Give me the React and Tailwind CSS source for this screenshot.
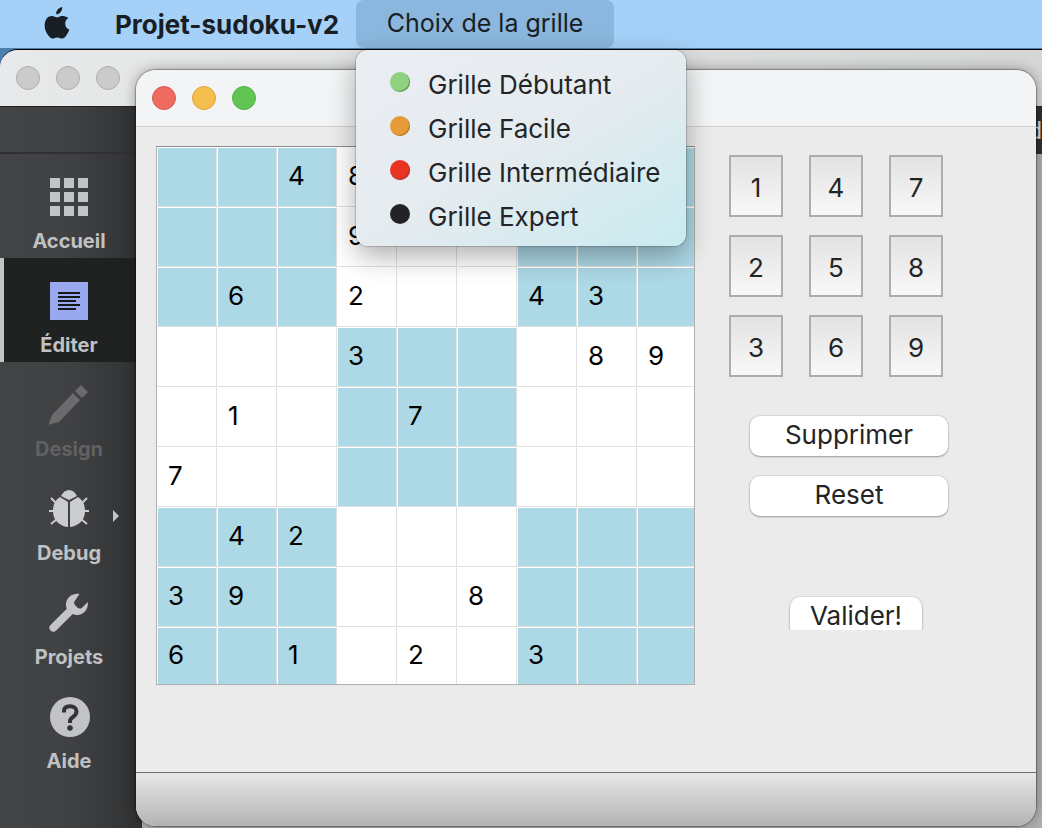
import React from "react";

const ROWS = [
  "..48.....",
  "...9.....",
  ".6.2..43.",
  "...3...89",
  ".1..7....",
  "7........",
  ".42......",
  "39...8...",
  "6.1.2.3..",
];

const KEYS = [1, 4, 7, 2, 5, 8, 3, 6, 9];

const LEVELS = [
  { label: "Grille Débutant", dot: "bg-[#8fd17f] shadow-[inset_-1px_-1px_0_#5f9d58]" },
  { label: "Grille Facile", dot: "bg-[#e69b38] shadow-[inset_-1px_-1px_0_#bd7a2c]" },
  { label: "Grille Intermédiaire", dot: "bg-[#e93323] shadow-[inset_-1px_-1px_0_#a93a33]" },
  { label: "Grille Expert", dot: "bg-[#232325]" },
];

function AppleIcon() {
  return (
    <svg width="26" height="32" viewBox="0 0 26 32" fill="#191e25" aria-hidden="true">
      <path d="M18.2 0c.3 2-.5 3.900-1.700 5.200-1.200 1.400-2.900 2.200-4.300 2.100-.2-1.900.6-3.800 1.700-5C15.100 1 16.900.1 18.200 0z" />
      <path d="M24.500 11.100c-2.300 1.300-3.400 3.200-3.300 5.600 0 2.900 1.600 4.900 4.200 5.900-.6 1.900-1.600 3.800-2.900 5.600-1.200 1.700-2.500 3.300-4.500 3.300-1.900 0-2.500-1.100-4.700-1.100-2.200 0-2.900 1.100-4.700 1.200-1.900.1-3.400-1.800-4.600-3.500C1.200 24.400-.700 18.100 1.700 13.200c1.300-2.600 3.700-4.100 6.200-4.100 2 0 3.800 1.300 5 1.300s3.400-1.600 5.700-1.400c1 0 3.800.4 5.900 2.100z" />
    </svg>
  );
}

function GridIcon() {
  return (
    <svg width="40" height="40" viewBox="0 0 40 40" fill="#c2c3c5" aria-hidden="true">
      <path d="M1 1h10v10H1zM15 1h10v10H15zM29 1h10v10H29zM1 15h10v10H1zM15 15h10v10H15zM29 15h10v10H29zM1 29h10v10H1zM15 29h10v10H15zM29 29h10v10H29z" />
    </svg>
  );
}

function EditIcon() {
  return (
    <svg width="40" height="40" viewBox="0 0 40 40" aria-hidden="true">
      <path fill="#9aa8f0" d="M1 1h38v38H1z" />
      <path fill="#15171a" d="M9 11h22v2H9zM9 15h22v2H9zM9 19h18v2H9zM9 23h22v2H9zM9 27h18v2H9z" />
    </svg>
  );
}

function DesignIcon() {
  return (
    <svg width="40" height="40" viewBox="0 0 40 40" fill="#6b6b6d" aria-hidden="true">
      <path d="M32 0l7 7-6 6-7-7zM24 8l7 7L10 37l-11 3 4-10z" />
    </svg>
  );
}

function BugIcon() {
  return (
    <svg width="40" height="40" viewBox="0 0 40 40" className="overflow-visible" aria-hidden="true">
      <g fill="#cbccce">
        <path d="M12 7C14 3 17 1 20 1s6 2 8 6l-8 4z" />
        <path d="M11 8l8 5v25C10 37 4 31 4 22 4 16 6 11 11 8zM29 8l-8 5v25c9-1 15-7 15-16 0-6-2-11-7-14z" />
      </g>
      <path stroke="#cbccce" strokeWidth="2" fill="none" d="M2 9l6 6M38 9l-6 6M0 22h5M40 22h-5M2 35l6-5M38 35l-6-5" />
    </svg>
  );
}

function WrenchIcon() {
  return (
    <svg width="40" height="40" viewBox="0 0 40 40" fill="#c4c5c7" aria-hidden="true">
      <path d="M30.500 1C24 0 17.500 4 17 11c-.1 1.800.2 3.300.8 4.800L1.500 32c-1.700 1.700-1.700 4 0 5.600 1.700 1.700 4 1.600 5.700 0L23.700 21c1.500.7 3 1 4.800.9 6.500-.400 11-6 10.300-12.900L33 14.700c-1.500 1.300-3.400 1-4.700-.2l-2.200-2.300c-1.400-1.500-1.400-3.200 0-4.700z" />
    </svg>
  );
}

function HelpIcon() {
  return (
    <svg width="40" height="40" viewBox="0 0 40 40" className="overflow-visible" aria-hidden="true">
      <circle cx="21" cy="20" r="20" fill="#c2c3c5" />
      <path d="M15 15.500V14c0-3.500 2.500-4.800 6-4.800s6.500 1.800 6.500 5.300c0 5.500-6.500 5.500-6.500 9.500v2" fill="none" stroke="#333436" strokeWidth="4" />
      <circle cx="21" cy="31" r="2.800" fill="#333436" />
    </svg>
  );
}

const MODES = [
  { label: "Accueil", Icon: GridIcon },
  { label: "Éditer", Icon: EditIcon, active: true },
  { label: "Design", Icon: DesignIcon, disabled: true },
  { label: "Debug", Icon: BugIcon, arrow: true },
  { label: "Projets", Icon: WrenchIcon },
  { label: "Aide", Icon: HelpIcon },
];

function MenuBar() {
  return (
    <header className="relative z-20 flex h-[48px] shrink-0 items-center bg-[#a5d1f8] text-[26px] text-[#191e25]">
      <span className="ml-[44px] mr-[45px] flex w-[26px] pb-[2px]">
        <AppleIcon />
      </span>
      <span className="w-[241px] whitespace-nowrap font-bold">Projet-sudoku-v2</span>
      <div className="relative h-full">
        <button type="button" className="h-full w-[258px] rounded-[8px] bg-[#8bb7de] text-[25px] whitespace-nowrap">
          Choix de la grille
        </button>
        <ul className="absolute left-0 top-[50px] w-[330px] rounded-[12px] bg-linear-to-br from-[#ebeef2] via-[#e5ebef] to-[#c9ebf0] pb-[8px] pt-[12px] shadow-[0_0_1px_1px_rgba(0,0,0,0.18),0_10px_28px_rgba(0,0,0,0.32)]">
          {LEVELS.map(({ label, dot }) => (
            <li key={label}>
              <button type="button" className="flex h-[44px] w-full items-center gap-[18px] whitespace-nowrap pl-[34px] text-left text-[26px] text-[#232528]">
                <span className={`mb-[4px] size-[20px] rounded-full ${dot}`} />
                {label}
              </button>
            </li>
          ))}
        </ul>
      </div>
    </header>
  );
}

function Sidebar() {
  return (
    <nav className="flex w-[142px] shrink-0 flex-col bg-linear-to-r from-[#434446] via-[#404143] to-[#303132]">
      <div className="h-[47px] border-b-2 border-[#303032]" />
      {MODES.map(({ label, Icon, active, disabled, arrow }) => (
        <button
          key={label}
          type="button"
          disabled={disabled}
          className={`relative flex h-[104px] w-[136px] flex-col items-center border-l-4 pr-[2px] pt-[23px] text-[20px] font-bold leading-[24px] ${
            active ? "border-[#c0c3c7] bg-[#202221]" : "border-transparent"
          } ${disabled ? "text-[#606163]" : "text-[#c0c1c3]"}`}
        >
          <Icon />
          <span className="mt-[12px]">{label}</span>
          {arrow && (
            <svg className="absolute right-[16px] top-[43px]" width="8" height="14" viewBox="0 0 8 14" fill="#c2c3c5" aria-hidden="true">
              <path d="M1 1l6 6-6 6z" />
            </svg>
          )}
        </button>
      ))}
    </nav>
  );
}

function EditorWindow() {
  return (
    <section className="mt-px flex grow flex-col overflow-hidden rounded-tl-[18px] border-t border-black">
      <div className="flex h-[57px] shrink-0 items-center gap-[16px] border-b border-[#222] bg-linear-to-r from-[#e8e9ea] to-[#d5d6d6] pl-[16px]">
        <span className="size-[24px] rounded-full border border-[#adaeaf] bg-[#cacbcb]" />
        <span className="size-[24px] rounded-full border border-[#adaeaf] bg-[#cacbcb]" />
        <span className="size-[24px] rounded-full border border-[#adaeaf] bg-[#cacbcb]" />
      </div>
      <div className="flex grow">
        <Sidebar />
        <div className="flex grow flex-col bg-[#b0b0b0]">
          <div className="flex h-[47px] items-center justify-end bg-[#303132] font-['Roboto',sans-serif] text-[24px] text-[#d8d8d8]">
            d
          </div>
        </div>
      </div>
    </section>
  );
}

function Board() {
  return (
    <table className="w-[539px] shrink-0 table-fixed border-separate border-spacing-0 border border-[#b0b0b0] border-t-[#8c8c8c] bg-white text-[26px] leading-[30px] text-black">
      <tbody>
        {ROWS.map((row, r) => (
          <tr key={r}>
            {row.split("").map((digit, c) => {
              const shaded = (Math.floor(r / 3) + Math.floor(c / 3)) % 2 === 0;
              return (
                <td
                  key={c}
                  className={`border-l border-t border-l-white border-t-white bg-clip-padding p-0 pb-[2px] pl-[10px] ${
                    c === 8 ? "w-[57px]" : "w-[60px] border-r border-r-[#e0e0e0]"
                  } ${r === 8 ? "h-[57px]" : "h-[60px] border-b border-b-[#e0e0e0]"} ${
                    shaded ? "bg-[#add8e6]" : "bg-white"
                  }`}
                >
                  {digit === "." ? "" : digit}
                </td>
              );
            })}
          </tr>
        ))}
      </tbody>
    </table>
  );
}

const PUSH =
  "h-[40px] rounded-[10px] bg-white pb-[2px] leading-[30px] shadow-[0_0_1px_1px_rgba(0,0,0,0.07),0_1px_2px_rgba(0,0,0,0.3)]";

function SudokuWindow() {
  return (
    <main className="absolute bottom-[2px] left-[136px] right-[6px] top-[70px] z-10 flex flex-col overflow-hidden rounded-[20px] bg-[#ebebeb] shadow-[0_0_1px_1px_rgba(0,0,0,0.3),0_0_14px_rgba(0,0,0,0.35)]">
      <div className="flex h-[57px] shrink-0 items-center gap-[16px] border-b border-[#cfd0d1] bg-[#f2f4f5] pl-[16px]">
        <button type="button" aria-label="Fermer" className="size-[24px] rounded-full border border-[#d9574c] bg-[#ed6b5f]" />
        <button type="button" aria-label="Réduire" className="size-[24px] rounded-full border border-[#dba63d] bg-[#f5bf4f]" />
        <button type="button" aria-label="Agrandir" className="size-[24px] rounded-full border border-[#50ae43] bg-[#61c554]" />
      </div>
      <div className="flex grow pl-[20px] pt-[19px]">
        <div>
          <Board />
        </div>
        <div className="ml-[34px] flex flex-col pt-[9px] text-[26px] text-[#242424]">
          <div className="grid grid-cols-[repeat(3,54px)] gap-x-[26px] gap-y-[18px]">
            {KEYS.map((n) => (
              <button key={n} type="button" className="h-[62px] border-2 border-[#adadad] bg-linear-to-b from-[#e2e2e2] to-[#f8f8f8] pt-[2px]">
                {n}
              </button>
            ))}
          </div>
          <div className="ml-[21px] mt-[39px] flex w-[198px] flex-col gap-[20px]">
            <button type="button" className={PUSH}>Supprimer</button>
            <button type="button" className={PUSH}>Reset</button>
          </div>
          <div className="ml-[59px] mt-[78px] h-[36px] w-[138px] overflow-hidden px-[2px] pt-[2px]">
            <button type="button" className={`w-[132px] ${PUSH}`}>Valider!</button>
          </div>
        </div>
      </div>
      <footer className="h-[54px] shrink-0 border-t border-[#6e6e6e] bg-linear-to-b from-[#e8e8e8] to-[#b3b3b3]" />
    </main>
  );
}

export default function App() {
  return (
    <div className="relative flex min-h-screen flex-col overflow-hidden bg-[#4b80ad] font-['Inter',sans-serif]">
      <MenuBar />
      <EditorWindow />
      <SudokuWindow />
    </div>
  );
}
